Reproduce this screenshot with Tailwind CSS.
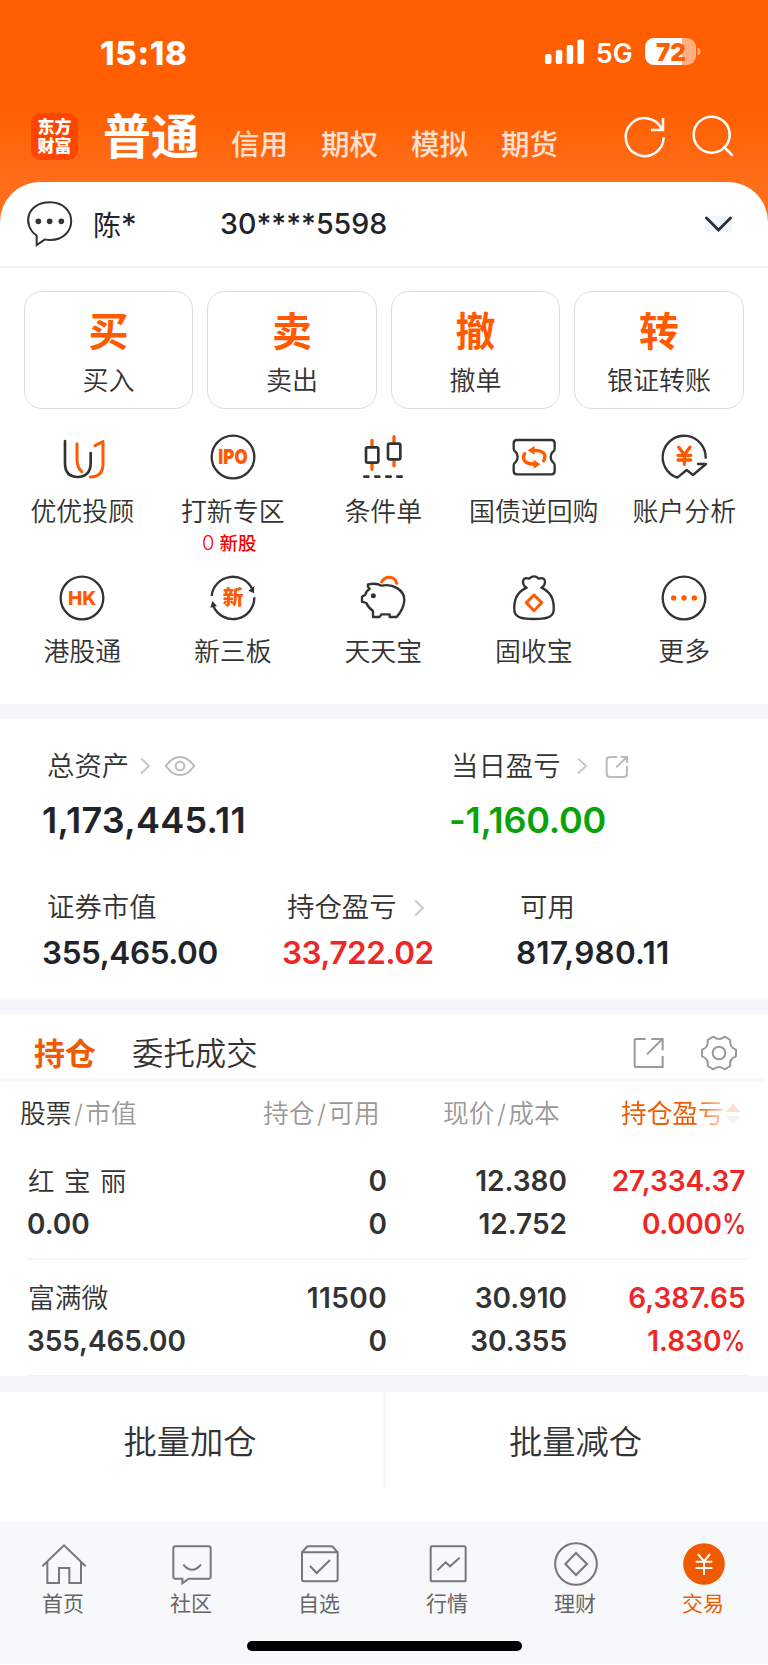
<!DOCTYPE html>
<html lang="zh-CN">
<head>
<meta charset="utf-8">
<title>交易</title>
<script src="https://cdn.jsdelivr.net/npm/@tailwindcss/browser@4"></script>
</head>
<body class="w-[768px] h-[1665px] overflow-hidden bg-white font-['Inter','Noto_Sans_CJK_SC',sans-serif] text-[#333] leading-none whitespace-nowrap">
<div class="bg-[linear-gradient(#ff5f00_107px,#ff6e1a_182px)]">
  <!-- status bar -->
  <header class="h-[98px] flex items-start pt-[37px] pl-[100px] text-white">
    <div class="h-8 w-[445px] flex items-center text-[33px] font-extrabold tracking-[0.700px]">15:18</div>
    <svg class="mt-[2px] w-10 h-[26px]" viewBox="0 0 40 26" fill="#fff"><rect x="0" y="15" width="6.5" height="10" rx="2"/><rect x="10.8" y="11" width="6.5" height="14" rx="2"/><rect x="21.7" y="6" width="6.5" height="19" rx="2"/><rect x="32.4" y="0.5" width="6.5" height="24.5" rx="2"/></svg>
    <div class="h-8 w-[48px] ml-[11px] flex items-center pt-px text-[26.500px] font-semibold">5G</div>
    <svg class="mt-[1px] ml-[1px] w-14 h-[27px]" viewBox="0 0 56 27"><defs><clipPath id="b"><rect width="51" height="27" rx="9"/></clipPath></defs><g clip-path="url(#b)"><rect width="51" height="27" fill="#ffaf80"/><rect width="37" height="27" fill="#fff"/></g><path d="M52.5 9.500q3 1 3 4t-3 4z" fill="#ffaf80"/><text x="26" y="22.500" text-anchor="middle" font-size="25" font-weight="900" textLength="30" lengthAdjust="spacingAndGlyphs" fill="#ff5f00">72</text></svg>
  </header>
  <!-- account type tabs -->
  <nav class="h-[84px] flex items-start pl-[31px] text-white">
    <div class="mt-[15px] size-[47px] rounded-[10px] bg-[#ff4500] flex flex-col items-center justify-center text-[17px] leading-[19px] font-black"><span>东方</span><span>财富</span></div>
    <div class="mt-[11px] ml-[25px] w-[128px] h-[56px] flex items-center text-[48px] font-bold">普通</div>
    <div class="mt-[29px] flex h-9 items-center text-[28.500px] font-medium text-white/80">
      <span class="w-[90px]">信用</span><span class="w-[90px]">期权</span><span class="w-[90px]">模拟</span><span class="w-[90px]">期货</span>
    </div>
    <svg class="mt-[15px] ml-[30px] w-12 h-12" viewBox="712 339 144 144" fill="none" stroke="#fff" stroke-width="7.500"><path d="M840 412A57 57 0 1 1 835 388M838 354V390H802"/></svg>
    <svg class="mt-[15px] ml-[20px] w-12 h-12" viewBox="917 339 144 144" fill="none" stroke="#fff" stroke-width="7.500"><circle cx="985" cy="404" r="54"/><path d="M1021 440L1048 467"/></svg>
  </nav>
  <!-- account row -->
  <section class="h-[86px] border-b-2 border-[#f1f1f1] rounded-t-[40px] bg-white flex items-center text-[#1f242b]">
    <svg class="ml-[25px] mt-[-1px] w-[50px] h-[50px]" viewBox="75 597 150 150" fill="none" stroke="#333" stroke-width="6"><path d="M110 735V707C65 675 80 607 149 607C235 607 235 719 150 720Q141 720 135 718Z" stroke-linejoin="miter"/><g fill="#333" stroke="none"><circle cx="115" cy="664" r="8.500"/><circle cx="149" cy="664" r="8.500"/><circle cx="184" cy="664" r="8.500"/></g></svg>
    <div class="ml-[18px] w-[127px] text-[28px]">陈<span class="text-[31px]">*</span></div>
    <div class="w-[485px] text-[28.600px] font-[450]">30****5598</div>
    <svg class="mt-0 w-[27px] h-[16px] bg-[#eef7ff]" viewBox="0 0 27 16" fill="none" stroke="#2b2f36" stroke-width="2.800" stroke-linecap="round"><path d="M1.500 2L13.500 14L25.500 2"/></svg>
  </section>
</div>

<!-- primary actions -->
<section class="pt-[23px] px-[23.500px] pr-[24px] grid grid-cols-4 gap-[13.800px] text-center">
  <div class="h-[118px] rounded-[18px] border border-[#ddd] pt-[20px]"><div class="text-[40px] h-[40px] font-bold text-[#ff5a00]">买</div><div class="mt-[16px] text-[26px] font-[350]">买入</div></div>
  <div class="h-[118px] rounded-[18px] border border-[#ddd] pt-[20px]"><div class="text-[40px] h-[40px] font-bold text-[#ff5a00]">卖</div><div class="mt-[16px] text-[26px] font-[350]">卖出</div></div>
  <div class="h-[118px] rounded-[18px] border border-[#ddd] pt-[20px]"><div class="text-[40px] h-[40px] font-bold text-[#ff5a00]">撤</div><div class="mt-[16px] text-[26px] font-[350]">撤单</div></div>
  <div class="h-[118px] rounded-[18px] border border-[#ddd] pt-[20px]"><div class="text-[40px] h-[40px] font-bold text-[#ff5a00]">转</div><div class="mt-[16px] text-[26px] font-[350]">银证转账</div></div>
</section>

<!-- feature grid -->
<section class="ml-[7px] mr-[8.500px] h-[295px] pt-6 grid grid-cols-5 grid-rows-[141px_130px] text-[25.900px] font-[350]">
  <div class="flex flex-col items-center"><svg class="w-12 h-12" viewBox="176 489 144 144" fill="none" stroke="#333" stroke-width="8" stroke-linecap="round" stroke-linejoin="round"><g stroke="#ff5a00" stroke-width="9"><path d="M233 521V568Q233 592 247 605M287 527L311 515V582Q311 620 273 621"/></g><path d="M197 513V580Q197 621 235 621T274 580V549"/></svg><span class="mt-[18px]">优优投顾</span></div>
  <div class="flex flex-col items-center"><svg class="w-12 h-12" viewBox="629 489 144 144"><circle cx="701" cy="561" r="64" fill="none" stroke="#333" stroke-width="7"/><text x="657" y="583" font-size="59" font-weight="900" textLength="88" lengthAdjust="spacingAndGlyphs" fill="#ff5a00">IPO</text></svg><span class="mt-[18px]">打新专区</span><span class="mt-[8px] pr-[7px] text-[18.500px] font-medium text-[#f00]"><span class="font-light text-[20px]">0</span> 新股</span></div>
  <div class="flex flex-col items-center"><svg class="w-12 h-12" viewBox="1080 489 144 144" fill="none" stroke="#333" stroke-width="8" stroke-linecap="round"><path stroke="#ff5a00" stroke-width="10" d="M1119 511V527M1119 582V598M1185 500V516M1185 573V587"/><rect x="1101" y="532" width="37" height="46" rx="5"/><rect x="1167" y="521" width="37" height="47" rx="5"/><path d="M1096 620H1108M1129 620H1141M1162 620H1175M1195 620H1208"/></svg><span class="mt-[18px]">条件单</span></div>
  <div class="flex flex-col items-center"><svg class="w-12 h-12" viewBox="379 489 144 144" fill="none" stroke="#333" stroke-width="7"><path d="M400 510H503q10 0 10 10V536Q513 542 507 546Q501 551 501 561T507 576Q513 580 513 586V603q0 10-10 10H400q-10 0-10-10V586Q390 580 396 576Q402 571 402 561T396 546Q390 542 390 536V520q0-10 10-10z"/><g stroke="#ff5a00" stroke-width="10" stroke-linecap="round"><path d="M423 551C412 571 428 583 452 582M480 572C491 551 476 541 452 541"/></g><path fill="#ff5a00" stroke="none" d="M450 569L470 583L450 596zM453 528L432 541L453 554z"/></svg><span class="mt-[18px]">国债逆回购</span></div>
  <div class="flex flex-col items-center"><svg class="w-12 h-12" viewBox="830 489 144 144" fill="none" stroke="#333" stroke-width="7" stroke-linecap="round" stroke-linejoin="round"><path d="M967 563A64.500 64.500 0 1 0 882 623L910 600L929 615L968 582H944"/><path stroke="#ff5a00" stroke-width="10" d="M886 532L903 554L920 532M903 554V583M884 556H922M884 570H922"/></svg><span class="mt-[18px]">账户分析</span></div>
  <div class="flex flex-col items-center"><svg class="w-12 h-12" viewBox="177 72 144 144"><circle cx="249" cy="144" r="64" fill="none" stroke="#333" stroke-width="7"/><text x="207" y="165" font-size="58" font-weight="800" textLength="85" lengthAdjust="spacingAndGlyphs" fill="#ff5a00">HK</text></svg><span class="mt-[17px]">港股通</span></div>
  <div class="flex flex-col items-center"><svg class="w-12 h-12" viewBox="629 72 144 144" fill="none" stroke="#333" stroke-width="7"><path d="M637 138A64 64 0 0 1 759 118M765 142A64 64 0 0 1 642 168"/><path fill="#333" stroke="none" d="M747 122L765 108L764 130zM633 173L639 153L653 168z"/><text x="701" y="166" text-anchor="middle" font-size="62" font-weight="900" fill="#ff5a00" stroke="none">新</text></svg><span class="mt-[17px]">新三板</span></div>
  <div class="flex flex-col items-center"><svg class="w-12 h-12" viewBox="1080 72 144 144" fill="none" stroke="#333" stroke-width="7" stroke-linejoin="round"><path d="M1107 103Q1131 98 1148 107C1180 100 1217 119 1216 151Q1214 177 1193 201H1172V193H1147L1142 201H1122V183Q1107 172 1102 159L1089 155V140L1099 134Q1101 123 1112 117Q1105 111 1107 103z"/><circle cx="1123" cy="137" r="7.500" fill="#333" stroke="none"/><path stroke="#ff5a00" stroke-width="9" stroke-linecap="round" d="M1148 96Q1156 82 1171 82Q1188 82 1193 100"/></svg><span class="mt-[17px]">天天宝</span></div>
  <div class="flex flex-col items-center"><svg class="w-12 h-12" viewBox="379 72 144 144" fill="none" stroke="#333" stroke-width="7" stroke-linejoin="round"><path d="M429 113Q418 107 418 95Q419 82 433 85Q438 87 442 82Q451 76 460 82Q464 87 469 85Q483 82 484 95Q484 107 473 113C500 125 512 150 510 180C510 205 480 207 451 207S392 205 392 180C390 150 402 125 429 113z"/><path stroke="#ff5a00" stroke-width="9" d="M451 135L474 158L451 182L428 158z"/></svg><span class="mt-[17px]">固收宝</span></div>
  <div class="flex flex-col items-center"><svg class="w-12 h-12" viewBox="830 72 144 144"><circle cx="902" cy="144" r="64" fill="none" stroke="#333" stroke-width="7"/><g fill="#ff5a00"><circle cx="871" cy="144" r="8"/><circle cx="902" cy="144" r="8"/><circle cx="933" cy="144" r="8"/></g></svg><span class="mt-[17px]">更多</span></div>
</section>
<div class="h-[15px] bg-[#f5f7fa]"></div>

<!-- assets -->
<section class="h-[280px] pt-[27px] text-[27.400px] font-[350]">
  <div class="h-10 flex items-center pl-[47px]">
    <div class="w-[404px] flex items-center"><span class="pt-[2px]">总资产</span><svg class="ml-[10px] w-[12px] h-[18px]" viewBox="0 0 12 18" fill="none" stroke="#c8c8c8" stroke-width="2"><path d="M2 1.500L10 9L2 16.500"/></svg><svg class="ml-[14px] w-[30px] h-[20px]" viewBox="0 0 30 20" fill="none" stroke="#bbb" stroke-width="2"><path d="M1 10C9-2 21-2 29 10C21 22 9 22 1 10z"/><circle cx="15" cy="10" r="4.300"/></svg></div>
    <div class="flex items-center"><span class="pt-[2px]">当日盈亏</span><svg class="ml-[15px] w-[12px] h-[18px]" viewBox="0 0 12 18" fill="none" stroke="#c8c8c8" stroke-width="2"><path d="M2 1.500L10 9L2 16.500"/></svg><svg class="ml-[17px] mt-[2px] w-6 h-6" viewBox="663 75 72 72" fill="none" stroke="#bbb" stroke-width="6"><path d="M699 81H678q-10 0-10 10V131q0 10 10 10H719q10 0 10-10V108M697 112L729 81M710 81H729V99"/></svg></div>
  </div>
  <div class="mt-3 h-11 flex items-center pl-[42px] text-[36px] font-semibold">
    <div class="w-[407px] text-[#1f242b] tracking-[0.250px]">1,173,445.11</div><div class="text-[#07a307] tracking-[-0.250px]">-1,160.00</div>
  </div>
  <div class="mt-[46px] h-10 flex items-center pl-[47px]">
    <div class="w-[240px]">证券市值</div>
    <div class="w-[233px] flex items-center">持仓盈亏<svg class="ml-[16px] w-[12px] h-[18px]" viewBox="0 0 12 18" fill="none" stroke="#c8c8c8" stroke-width="2"><path d="M2 1.500L10 9L2 16.500"/></svg></div>
    <div>可用</div>
  </div>
  <div class="mt-[5px] h-10 flex items-center pl-[42px] text-[31.500px] font-semibold text-[#1f242b]">
    <div class="w-[240px] tracking-[-0.400px]">355,465.00</div><div class="w-[234px] text-[#ed2626] tracking-[-0.450px]">33,722.02</div><div class="tracking-[0.200px]">817,980.11</div>
  </div>
</section>
<div class="h-[15px] bg-[#f5f7fa]"></div>

<!-- positions -->
<section>
  <div class="h-16 flex items-center pt-[14px] pl-[34px] text-[31px]">
    <div class="w-[98px] font-bold text-[#f05a00]">持仓</div>
    <div class="w-[499px] pt-[3px] text-[31.400px] font-[350]">委托成交</div>
    <svg class="w-9 h-9" viewBox="741 106 108 108" fill="none" stroke="#999" stroke-width="6"><path d="M785 118H756q-4 0-4 4V198q0 4 4 4H836V169M789 164L835 118M802 118H836V152"/></svg>
    <svg class="ml-[32px] w-10 h-10" viewBox="945 100 120 120" fill="none" stroke="#999" stroke-width="6" stroke-linejoin="round"><g transform="translate(1005 160)"><path d="M51-10V10Q30 17.500 34 39L17 49Q0 35-17 49L-34 39Q-30 17.500-51 10V-10Q-30-17.500-34-39L-17-49Q0-35 17-49L34-39Q30-17.500 51-10z"/><circle r="19"/></g></svg>
  </div>
  <div class="mr-1 h-1 bg-[#f7f8fa]"></div>
  <div class="h-16 flex items-center text-[25.700px] text-[#999] pl-5 font-[350]">
    <div class="w-[243px]"><span class="text-[#333]">股票</span><span class="mx-[2.500px]">/</span>市值</div>
    <div class="w-[180px]">持仓<span class="mx-[2.500px]">/</span>可用</div>
    <div class="w-[178px]">现价<span class="mx-[2.500px]">/</span>成本</div>
    <div class="flex items-center font-normal"><span class="bg-[linear-gradient(90deg,#f05a00_72%,#fbd0b5)] bg-clip-text text-transparent py-1">持仓盈亏</span><svg class="ml-px w-4 h-6" viewBox="0 0 16 24"><path d="M8 1.500L15.500 10H.5z" fill="#fde0cf"/><path d="M8 22.500L15.500 14H.5z" fill="#f3f3f5"/></svg></div>
  </div>
  <div class="ml-[27px] mr-5 h-[114px] border-b-2 border-[#f7f7f8] pt-[14px] text-[28px] font-semibold">
    <div class="h-[42.500px] grid grid-cols-[160px_200px_180px_178.500px] text-right items-center"><span class="text-left text-[26.500px] font-[350] [word-spacing:2px] pl-px">红 宝 丽</span><span>0</span><span>12.380</span><span class="text-[#ed2626]">27,334.37</span></div>
    <div class="h-[42.500px] grid grid-cols-[160px_200px_180px_178.500px] text-right items-center"><span class="text-left">0.00</span><span>0</span><span>12.752</span><span class="text-[#ed2626] tracking-[-0.300px]">0.000<span class="inline-block origin-right scale-x-[.85] -ml-[4px]">%</span></span></div>
  </div>
  <div class="ml-[27px] mr-5 h-[116px] border-b border-[#f1f2f4] pt-[17px] text-[28px] font-semibold">
    <div class="h-[42.500px] grid grid-cols-[160px_200px_180px_178.500px] text-right items-center"><span class="text-left text-[26.800px] font-[350] pl-px">富满微</span><span class="tracking-[0.400px]">11500</span><span>30.910</span><span class="text-[#ed2626]">6,387.65</span></div>
    <div class="h-[42.500px] grid grid-cols-[160px_200px_180px_178.500px] text-right items-center"><span class="text-left tracking-[-0.100px]">355,465.00</span><span>0</span><span>30.355</span><span class="text-[#ed2626]">1.830<span class="inline-block origin-right scale-x-[.85] -ml-[4px]">%</span></span></div>
  </div>
</section>
<div class="h-4 bg-[#f5f7fa]"></div>

<!-- batch actions -->
<section class="h-[130px] flex text-[33.300px] font-[350] text-center leading-[100px]">
  <div class="w-[386px] h-[97px] border-r-[3px] border-[#f7f8fa] pr-[3px]">批量加仓</div>
  <div class="flex-1 h-[97px] pr-[3px]">批量减仓</div>
</section>

<!-- tab bar -->
<footer class="h-[142px] bg-[#f7f8fa]">
  <nav class="grid grid-cols-6 pt-[18px] text-[21px] text-[#666]">
    <div class="flex flex-col items-center"><svg class="w-12 h-12" viewBox="119 509 144 144" fill="none" stroke="#777" stroke-width="6"><path d="M126 588L191 525L256 588M141 575V638H176V593H207V638H242V575"/></svg><span class="mt-[5px] pr-[2px]">首页</span></div>
    <div class="flex flex-col items-center"><svg class="w-12 h-12" viewBox="503 509 144 144" fill="none" stroke="#777" stroke-width="6"><path d="M525 528H625q6 0 6 6V619q0 6-6 6H565L546 639V625H525q-6 0-6-6V534q0-6 6-6zM549 583Q575 614 602 583"/></svg><span class="mt-[5px] pr-[2px]">社区</span></div>
    <div class="flex flex-col items-center"><svg class="w-12 h-12" viewBox="887 509 144 144" fill="none" stroke="#777" stroke-width="6"><path d="M905 546L919 530Q921 528 924 528H993Q996 528 998 530L1012 546M905 546H1012V627q0 6-6 6H911q-6 0-6-6zM929 587L949 608L989 569"/></svg><span class="mt-[5px] pr-[2px]">自选</span></div>
    <div class="flex flex-col items-center"><svg class="w-12 h-12" viewBox="119 509 144 144" fill="none" stroke="#777" stroke-width="6"><rect x="139" y="528" width="105" height="105" rx="5"/><path d="M159 600L184 576L197 588L226 562"/></svg><span class="mt-[5px] pr-[2px]">行情</span></div>
    <div class="flex flex-col items-center"><svg class="w-12 h-12" viewBox="503 509 144 144" fill="none" stroke="#777" stroke-width="6"><circle cx="575" cy="581" r="62.500"/><path d="M575 548L608 581L575 614L543 581z"/></svg><span class="mt-[5px] pr-[2px]">理财</span></div>
    <div class="flex flex-col items-center text-[#f05a00]"><svg class="w-12 h-12" viewBox="887 509 144 144" fill="none" stroke="#fff" stroke-width="6"><circle cx="959" cy="581" r="62.500" fill="#f05a00" stroke="none"/><path d="M941 551L959 573L977 551M959 573V614M934 574H984M934 593H984"/></svg><span class="mt-[5px] pr-[2px]">交易</span></div>
  </nav>
  <div class="mx-auto mt-[27px] w-[275px] h-[9.500px] rounded-full bg-black"></div>
</footer>
</body>
</html>
